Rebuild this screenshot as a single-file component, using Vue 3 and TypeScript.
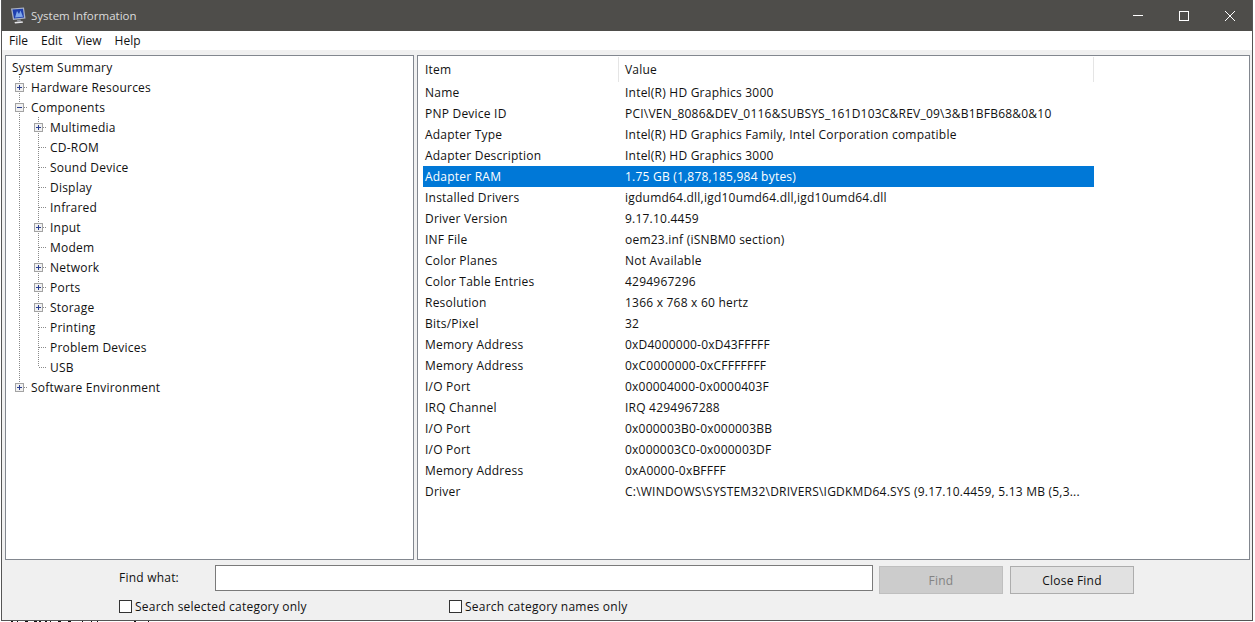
<script setup lang="ts">
type Cell = 'stub' | 'line' | 'tee' | 'elbow' | 'plus' | 'minus' | 'plusEnd'
interface TreeRow { label: string; cells: Cell[]; root?: boolean }

const leaf = (label: string, last = false): TreeRow => ({ label, cells: ['line', last ? 'elbow' : 'tee'] })
const branch = (label: string): TreeRow => ({ label, cells: ['line', 'plus'] })

const tree: TreeRow[] = [
  { label: 'System Summary', cells: ['stub'], root: true },
  { label: 'Hardware Resources', cells: ['plus'] },
  { label: 'Components', cells: ['minus'] },
  branch('Multimedia'),
  leaf('CD-ROM'),
  leaf('Sound Device'),
  leaf('Display'),
  leaf('Infrared'),
  branch('Input'),
  leaf('Modem'),
  branch('Network'),
  branch('Ports'),
  branch('Storage'),
  leaf('Printing'),
  leaf('Problem Devices'),
  leaf('USB', true),
  { label: 'Software Environment', cells: ['plusEnd'] },
]

const rows: [string, string, boolean?][] = [
  ['Name', 'Intel(R) HD Graphics 3000'],
  ['PNP Device ID', 'PCI\\VEN_8086&DEV_0116&SUBSYS_161D103C&REV_09\\3&B1BFB68&0&10'],
  ['Adapter Type', 'Intel(R) HD Graphics Family, Intel Corporation compatible'],
  ['Adapter Description', 'Intel(R) HD Graphics 3000'],
  ['Adapter RAM', '1.75 GB (1,878,185,984 bytes)', true],
  ['Installed Drivers', 'igdumd64.dll,igd10umd64.dll,igd10umd64.dll'],
  ['Driver Version', '9.17.10.4459'],
  ['INF File', 'oem23.inf (iSNBM0 section)'],
  ['Color Planes', 'Not Available'],
  ['Color Table Entries', '4294967296'],
  ['Resolution', '1366 x 768 x 60 hertz'],
  ['Bits/Pixel', '32'],
  ['Memory Address', '0xD4000000-0xD43FFFFF'],
  ['Memory Address', '0xC0000000-0xCFFFFFFF'],
  ['I/O Port', '0x00004000-0x0000403F'],
  ['IRQ Channel', 'IRQ 4294967288'],
  ['I/O Port', '0x000003B0-0x000003BB'],
  ['I/O Port', '0x000003C0-0x000003DF'],
  ['Memory Address', '0xA0000-0xBFFFF'],
  ['Driver', 'C:\\WINDOWS\\SYSTEM32\\DRIVERS\\IGDKMD64.SYS (9.17.10.4459, 5.13 MB (5,3...'],
]

const menus = ['File', 'Edit', 'View', 'Help']

const vertical: Record<Cell, string> = {
  stub: 'M9.5 17 V20',
  line: 'M9.5 0 V20',
  tee: 'M9.5 0 V20',
  elbow: 'M9.5 0 V10',
  plus: 'M9.5 0 V20',
  minus: 'M9.5 0 V20',
  plusEnd: 'M9.5 0 V10',
}
const horizontal: Partial<Record<Cell, string>> = {
  tee: 'M10 10.5 H18',
  elbow: 'M10 10.5 H18',
  plus: 'M14 10.5 H18',
  minus: 'M14 10.5 H18',
  plusEnd: 'M14 10.5 H18',
}
const hasBox = (c: Cell) => c === 'plus' || c === 'minus' || c === 'plusEnd'
</script>

<template>
  <div class="page">
    <div class="window">
      <header class="titlebar">
        <svg class="appicon" width="16" height="17" viewBox="0 0 16 17">
          <path d="M1 1.5 L14 0.5 L15.5 11.5 L3 13 Z" fill="#aab2c4" />
          <path d="M2.5 2.5 L13 1.8 L14 10.5 L4 11.6 Z" fill="#1f3fae" />
          <path d="M5 10.5 L7 4 L9 7 L10.5 3.5 L13 9.8 Z" fill="#7ea6ea" />
          <path d="M7 13 L10.5 12.6 L11 14.2 L7.4 14.6 Z" fill="#8b8f99" />
          <path d="M4.5 15 L12.5 14.2 L13 15.8 L5 16.5 Z" fill="#e6e7ea" />
        </svg>
        <span class="title">System Information</span>
        <div class="controls">
          <svg width="12" height="12" viewBox="0 0 12 12"><path d="M1 5.5 H11" stroke="#fff" fill="none" /></svg>
          <svg width="12" height="12" viewBox="0 0 12 12"><rect x="1.5" y="1.5" width="9" height="9" stroke="#fff" fill="none" /></svg>
          <svg width="12" height="12" viewBox="0 0 12 12"><path d="M1 1 L11 11 M11 1 L1 11" stroke="#fff" fill="none" /></svg>
        </div>
      </header>

      <nav class="menubar">
        <span v-for="m in menus" :key="m">{{ m }}</span>
      </nav>

      <main class="body">
        <section class="panel tree">
          <div v-for="row in tree" :key="row.label" class="node" :class="{ root: row.root }">
            <svg
              v-for="(cell, i) in row.cells"
              :key="i"
              class="cell"
              width="19"
              height="20"
              viewBox="0 0 19 20"
              shape-rendering="crispEdges"
            >
              <path :d="vertical[cell]" stroke="#8a8a8a" stroke-dasharray="1 1" fill="none" />
              <path v-if="horizontal[cell]" :d="horizontal[cell]" stroke="#8a8a8a" stroke-dasharray="1 1" fill="none" />
              <template v-if="hasBox(cell)">
                <rect x="5.5" y="6.5" width="8" height="8" fill="#f1f1f1" stroke="#a3a3a3" />
                <path d="M7 10.5 H12" stroke="#2b3f8f" fill="none" />
                <path v-if="cell !== 'minus'" d="M9.5 8 V13" stroke="#2b3f8f" fill="none" />
              </template>
            </svg>
            <span class="label">{{ row.label }}</span>
          </div>
        </section>

        <section class="panel list">
          <div class="lhead">
            <span class="hcol c1">Item</span>
            <span class="hcol c2">Value</span>
          </div>
          <div v-for="(r, i) in rows" :key="i" class="lrow" :class="{ sel: r[2] }">
            <span class="c1">{{ r[0] }}</span>
            <span class="c2">{{ r[1] }}</span>
          </div>
        </section>
      </main>

      <footer class="find">
        <div class="findrow">
          <label class="findlabel">Find what:</label>
          <input class="findinput" type="text" />
          <button class="btn disabled" type="button">Find</button>
          <button class="btn" type="button">Close Find</button>
        </div>
        <div class="checks">
          <label class="check first"><span class="box"></span>Search selected category only</label>
          <label class="check"><span class="box"></span>Search category names only</label>
        </div>
      </footer>
    </div>
    <svg class="behind" width="170" height="1" viewBox="0 0 170 1" shape-rendering="crispEdges">
      <path
        d="M10 .5 H12 M16 .5 H17 M24 .5 H27 M33 .5 H36 M38 .5 H40 M44 .5 H46 M49 .5 H50 M57 .5 H60 M67 .5 H70 M81 .5 H82 M90 .5 H91 M96 .5 H97 M133 .5 H135 M147 .5 H148"
        stroke="#111"
        fill="none"
      />
    </svg>
  </div>
</template>

<style>
html, body { margin: 0; background: #fff; }
</style>

<style scoped>
.page {
  width: 1255px;
  height: 622px;
  overflow: hidden;
  font-family: "Open Sans", "Noto Sans", sans-serif;
  font-size: 12px;
  letter-spacing: 0.22px;
  color: #111;
  box-sizing: border-box;
  padding: 0 2px 0 1px;
}
.behind { display: block; }
.window {
  height: 621px;
  display: flex;
  flex-direction: column;
  box-sizing: border-box;
  border: 1px solid #555;
  border-top: 0;
  background: #f0f0f0;
}
.titlebar {
  height: 31px;
  flex: none;
  background: #4e4d4a;
  display: flex;
  align-items: center;
  padding-left: 8px;
  color: #dcdcdc;
}
.appicon { margin-right: 5px; }
.title { font-size: 11.5px; letter-spacing: 0; }
.controls {
  margin-left: auto;
  display: flex;
  gap: 34px;
  padding-right: 16px;
}
.menubar {
  height: 19px;
  flex: none;
  background: #fff;
  display: flex;
  align-items: center;
  gap: 13px;
  padding-left: 7px;
  letter-spacing: 0;
}
.body {
  flex: none;
  display: flex;
  gap: 3px;
  padding: 5px 2px 0 3px;
}
.panel {
  box-sizing: border-box;
  background: #fff;
  border: 1px solid #82878f;
  height: 505px;
}
.tree {
  width: 409px;
  flex: none;
  padding: 1px 0 0 4px;
}
.node {
  height: 20px;
  display: flex;
  align-items: center;
}
.cell { flex: none; display: block; }
.label { padding-left: 2px; white-space: nowrap; }
.node.root .label { margin-left: -19px; }
.list {
  flex: 1;
  padding: 1px 0 0 5px;
}
.lhead {
  height: 25px;
  width: 671px;
  display: flex;
}
.hcol { line-height: 25px; box-sizing: border-box; border-right: 1px solid #e5e5e5; }
.c1 { width: 196px; flex: none; padding-left: 2px; box-sizing: border-box; }
.c2 { flex: 1; padding-left: 6px; white-space: nowrap; }
.lrow {
  height: 21px;
  width: 671px;
  display: flex;
  align-items: center;
}
.lrow.sel { background: #0078d7; color: #fff; }
.find {
  flex: 1;
  min-height: 0;
  padding-left: 117px;
}
.findrow {
  display: flex;
  align-items: flex-start;
  padding-top: 5px;
}
.findlabel { width: 96px; flex: none; line-height: 26px; }
.findinput {
  width: 658px;
  height: 26px;
  box-sizing: border-box;
  border: 1px solid #7a7a7a;
  background: #fff;
  margin: 0 6px 0 0;
  padding: 0;
  outline: none;
}
.btn {
  width: 124px;
  height: 28px;
  box-sizing: border-box;
  border: 1px solid #adadad;
  background: #e1e1e1;
  font: inherit;
  letter-spacing: inherit;
  color: #111;
  margin: 1px 7px 0 0;
  padding: 0;
}
.btn.disabled { background: #ccc; border-color: #bfbfbf; color: #838383; }
.checks {
  display: flex;
  padding-top: 3px;
}
.check { display: flex; align-items: center; height: 18px; }
.check.first { width: 330px; }
.box {
  width: 13px;
  height: 13px;
  box-sizing: border-box;
  border: 1px solid #333;
  background: #fff;
  margin-right: 3px;
}
</style>
